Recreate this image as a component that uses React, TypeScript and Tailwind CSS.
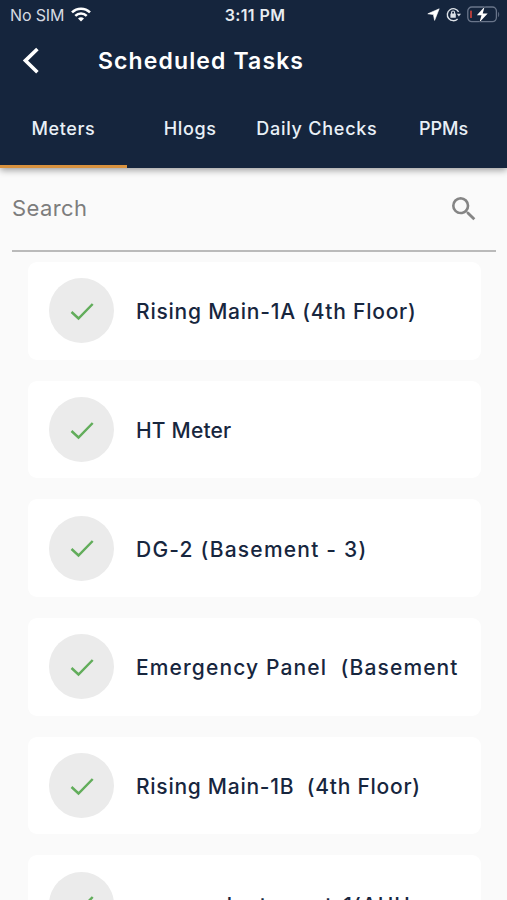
import React, { useState } from "react";
import { MdSearch } from "react-icons/md";

const tabs = [
  { name: "Meters", className: "tracking-[0.6px]" },
  { name: "Hlogs", className: "tracking-[0.6px]" },
  { name: "Daily Checks", className: "tracking-[0.75px]" },
  { name: "PPMs", className: "tracking-[0px]" },
];

const tasks = [
  { name: "Rising Main-1A (4th Floor)", className: "tracking-[0.77px]" },
  { name: "HT Meter", className: "tracking-[0.2px]" },
  { name: "DG-2 (Basement - 3)", className: "tracking-[1.22px]" },
  { name: "Emergency Panel  (Basement", className: "tracking-[1.12px]" },
  { name: "Rising Main-1B  (4th Floor)", className: "tracking-[0.73px]" },
  { name: "server plant asset-1(AHU", className: "tracking-[0.98px]" },
];

function StatusBar() {
  return (
    <div className="grid h-[29px] grid-cols-3 items-center pl-[10px] pr-[7px] text-[16px] leading-none">
      <div className="flex items-center gap-[7px] text-[#d5dae1]">
        <span className="whitespace-nowrap tracking-[-0.15px]">No SIM</span>
        <svg width="20" height="15" viewBox="0 0 20 15" fill="none" stroke="#fff" strokeWidth="2.5">
          <path d="M1 5.4a12.7 12.7 0 0 1 18 0" />
          <path d="M4.3 8.8a8.1 8.1 0 0 1 11.4 0" />
          <path d="M10 14.6 7 11.6a4.3 4.3 0 0 1 6 0z" fill="#fff" stroke="none" />
        </svg>
      </div>
      <span className="justify-self-center whitespace-nowrap font-semibold tracking-[0.4px] text-[#e8ecf0]">3:11 PM</span>
      <div className="flex items-center justify-end gap-[6px]">
        <svg width="13" height="13" viewBox="0 0 13 13" fill="#fff">
          <path d="M12.2.8 7.6 12.4 6.4 6.6.8 5.8z" stroke="#fff" strokeWidth="0.6" strokeLinejoin="round" />
        </svg>
        <svg width="15" height="15" viewBox="0 0 15 15" fill="none" stroke="#dde2e8" strokeWidth="1.4">
          <path d="M12.6 4.8A6 6 0 1 0 11.6 11.9" />
          <path d="M10.8 6.8h4.2l-2.1 2.8z" fill="#dde2e8" stroke="none" />
          <rect x="4.4" y="6.6" width="5.4" height="4.2" rx="0.5" fill="#dde2e8" stroke="none" />
          <path d="M5.6 7V5.5a1.5 1.5 0 0 1 3 0V7" strokeWidth="1.1" />
        </svg>
        <svg width="33" height="17" viewBox="0 0 33 17" fill="none">
          <rect x="0.8" y="1" width="28.6" height="14.6" rx="4" stroke="#69758a" strokeWidth="1.3" />
          <path d="M31.2 6v5c1.3-.5 1.3-4.5 0-5z" fill="#69758a" />
          <rect x="3.2" y="4.5" width="1.6" height="7.6" rx="0.6" fill="#d8443c" />
          <path d="M17.6.8 9.8 9.3h4.7l-2 7 8.2-8.7h-5z" fill="#fff" stroke="#15253d" strokeWidth="1" paintOrder="stroke" />
        </svg>
      </div>
    </div>
  );
}

export default function App() {
  const [active, setActive] = useState("Meters");
  const [search, setSearch] = useState("");

  return (
    <div className="flex h-[900px] w-[507px] flex-col overflow-hidden bg-[#fafafa] font-['Inter',sans-serif]">
      {/* Header */}
      <header className="h-[168px] shrink-0 bg-[#15253d] text-white shadow-[0_2px_7px_rgba(0,0,0,0.4)]">
        <StatusBar />
        <div className="flex h-[63px] items-center pl-[21px]">
          <button type="button" aria-label="Back">
            <svg width="20" height="28" viewBox="0 0 20 28" fill="none" stroke="#fff" strokeWidth="3.6">
              <path d="M16.4 2 4.4 13.6l12 11.6" />
            </svg>
          </button>
          <h1 className="ml-[57px] pt-[2px] text-[23px] font-semibold leading-none tracking-[1.12px]">Scheduled Tasks</h1>
        </div>
        <nav className="grid h-[76px] grid-cols-4">
          {tabs.map((tab) => (
            <button
              key={tab.name}
              type="button"
              onClick={() => setActive(tab.name)}
              className={`flex items-center justify-center whitespace-nowrap border-b-[3px] text-[18px] font-medium leading-none text-[#e9f0f7] ${tab.className} ${
                active === tab.name ? "border-[#d8923f]" : "border-transparent"
              }`}
            >
              {tab.name}
            </button>
          ))}
        </nav>
      </header>

      {/* Search */}
      <div className="ml-[12px] mr-[11px] flex h-[84px] shrink-0 items-center border-b-2 border-[#bababa]">
        <input
          value={search}
          onChange={(e) => setSearch(e.target.value)}
          placeholder="Search"
          className="min-w-0 flex-1 pb-[3px] text-[22px] leading-none tracking-[0.4px] placeholder-[#7d7d7d] outline-none"
        />
        <MdSearch size={32} className="mr-[16px] text-[#858585]" />
      </div>

      {/* Task list */}
      <ul className="ml-[28px] mr-[26px] mt-[10px] flex flex-col gap-[21px]">
        {tasks.map((task) => (
          <li key={task.name} className="flex h-[97.7px] shrink-0 items-center overflow-hidden rounded-[9px] bg-white pl-[21px]">
            <span className="flex size-[65px] shrink-0 items-center justify-center rounded-full bg-[#ebebeb]">
              <svg width="24" height="20" viewBox="0 0 24 20" fill="none" stroke="#62ad5b" strokeWidth="2.5">
                <path d="M1.5 11 8.5 17.5 22.7 3" />
              </svg>
            </span>
            <span className={`ml-[22px] whitespace-pre pt-[2px] text-[21px] font-medium leading-none text-[#17263e] ${task.className}`}>
              {task.name}
            </span>
          </li>
        ))}
      </ul>
    </div>
  );
}
